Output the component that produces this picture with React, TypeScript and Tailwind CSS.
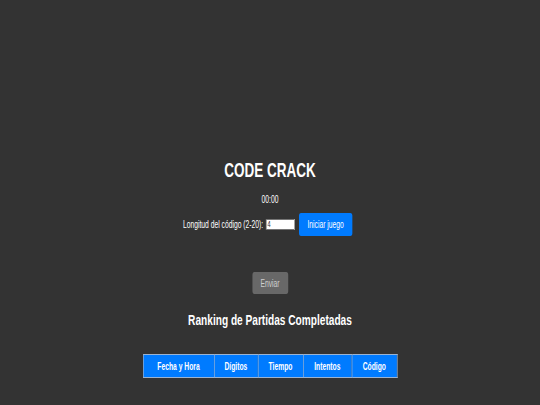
import React from 'react';

// widths are pre-scale: the whole column is squeezed horizontally (scale-x 0.675)
const headers = [
    { label: 'Fecha y Hora', w: 'w-[105px]' },
    { label: 'Dígitos', w: 'w-[65px]' },
    { label: 'Tiempo', w: 'w-[67px]' },
    { label: 'Intentos', w: 'w-[72px]' },
    { label: 'Código', w: 'w-[67px]' },
];

export default function App() {
    return (
        <div className="min-h-screen bg-[#333333] text-white font-['Liberation_Sans',Arial,sans-serif]">
            <div className="flex flex-col items-center pt-[159px] scale-x-[0.675]">
                <h1 className="text-[20px] leading-[23px] font-bold">CODE CRACK</h1>

                <div className="mt-[12px] text-[10px] leading-[12px]">00:00</div>

                <div className="mt-[7px] mr-[7px] flex items-center">
                    <label className="text-[10px] leading-[12px]">Longitud del código (2-20):</label>
                    <input
                        type="number"
                        readOnly
                        value="4"
                        className="ml-[4px] w-[43px] h-[11px] bg-white text-[#333] text-[9px] leading-[11px] px-[1px] outline-none border border-[#767676]"
                    />
                    <button className="ml-[6px] w-[79px] h-[23px] bg-[#007bff] rounded-[3px] text-[10px] text-white">
                        Iniciar juego
                    </button>
                </div>

                <button className="mt-[36px] w-[53px] h-[22px] bg-[#686868] rounded-[3px] text-[10px] text-[#cfcfcf]">
                    Enviar
                </button>

                <h2 className="mt-[17px] text-[15px] leading-[17px] font-bold">Ranking de Partidas Completadas</h2>

                <table className="mt-[26px] border-collapse border border-[#9bb3d1]">
                    <thead>
                        <tr className="bg-[#007bff]">
                            {headers.map((h) => (
                                <th
                                    key={h.label}
                                    className={`${h.w} h-[23px] p-0 border border-[#9bb3d1] text-[10px] font-bold text-white text-center`}
                                >
                                    {h.label}
                                </th>
                            ))}
                        </tr>
                    </thead>
                </table>
            </div>
        </div>
    );
}
